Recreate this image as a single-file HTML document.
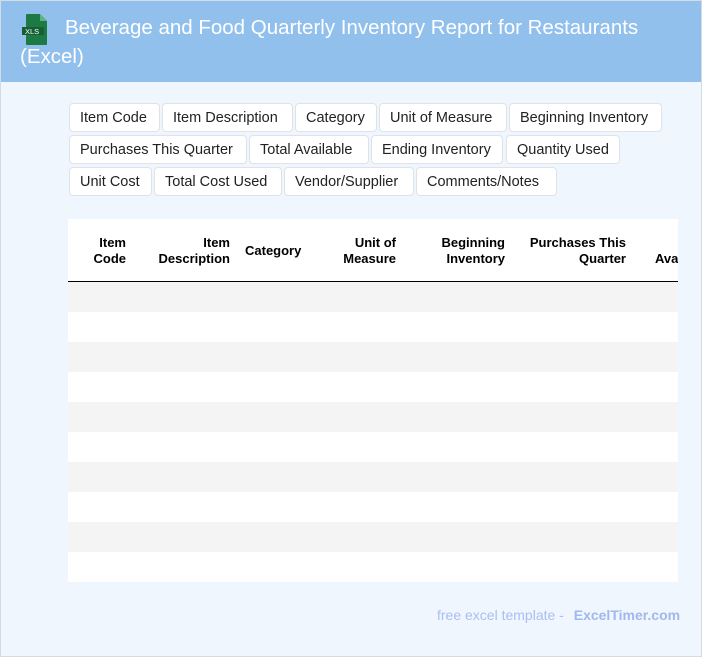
<!DOCTYPE html>
<html><head><meta charset="utf-8"><style>
*{box-sizing:border-box;margin:0;padding:0}
body{width:702px;height:657px;background:#eff6fe;font-family:"Liberation Sans",Roboto,sans-serif;overflow:hidden;position:relative}
.bd{position:absolute;left:0;top:0;width:702px;height:657px;border:1px solid #d3dbe3}
.hdr{position:absolute;left:1px;top:1px;width:700px;height:81px;background:#91c0ec}
.title{position:absolute;left:20px;top:13px;width:670px;color:#fff;font-size:20.5px;line-height:29px;text-indent:45px}
.tag{position:absolute;height:29px;border:1px solid #dfe3e8;border-radius:4px;background:#fff;font-size:14.5px;line-height:28px;padding:0 10px;color:#222;white-space:nowrap}
.tbl{position:absolute;left:68px;top:219px;width:610px;height:363px;background:#fff;overflow:hidden}
.th{position:absolute;font-weight:bold;font-size:13px;line-height:16px;color:#000;white-space:nowrap}
.r{text-align:right}
.line{position:absolute;left:0;top:62px;width:610px;height:1px;background:#000}
.row{position:absolute;left:0;width:610px;height:30px}
.g{background:#f4f4f4}
.foot{position:absolute;left:437px;top:607px;font-size:14px;color:#a9bff0}
.foot b{color:#a1b8ec;margin-left:6px}
</style></head><body>
<div class="hdr"></div>
<svg style="position:absolute;left:22px;top:14px" width="28" height="31" viewBox="0 0 28 31"><path d="M5 0h13l7 7v23a1 1 0 0 1-1 1H5a1 1 0 0 1-1-1V1a1 1 0 0 1 1-1z" fill="#1e7a45"/><path d="M18 0v7h7z" fill="#5fb27f"/><rect x="0" y="13" width="22" height="8" fill="#155f35"/><text x="3" y="20" font-family="Liberation Sans" font-size="7.5" fill="#fff">XLS</text></svg>
<div class="title">Beverage and Food Quarterly Inventory Report for Restaurants (Excel)</div>
<div class="tag" style="left:69px;top:103px;width:91px">Item Code</div>
<div class="tag" style="left:162px;top:103px;width:131px">Item Description</div>
<div class="tag" style="left:295px;top:103px;width:82px">Category</div>
<div class="tag" style="left:379px;top:103px;width:128px">Unit of Measure</div>
<div class="tag" style="left:509px;top:103px;width:153px">Beginning Inventory</div>
<div class="tag" style="left:69px;top:135px;width:178px">Purchases This Quarter</div>
<div class="tag" style="left:249px;top:135px;width:120px">Total Available</div>
<div class="tag" style="left:371px;top:135px;width:132px">Ending Inventory</div>
<div class="tag" style="left:506px;top:135px;width:114px">Quantity Used</div>
<div class="tag" style="left:69px;top:167px;width:83px">Unit Cost</div>
<div class="tag" style="left:154px;top:167px;width:128px">Total Cost Used</div>
<div class="tag" style="left:284px;top:167px;width:130px">Vendor/Supplier</div>
<div class="tag" style="left:416px;top:167px;width:141px">Comments/Notes</div>
<div class="tbl">
<div class="th r" style="right:552px;top:16px">Item<br>Code</div>
<div class="th r" style="right:448px;top:16px">Item<br>Description</div>
<div class="th" style="left:177px;top:24px">Category</div>
<div class="th r" style="right:282px;top:16px">Unit of<br>Measure</div>
<div class="th r" style="right:173px;top:16px">Beginning<br>Inventory</div>
<div class="th r" style="right:52px;top:16px">Purchases This<br>Quarter</div>
<div class="th" style="left:587px;top:32px">Available</div>
<div class="line"></div>
<div class="row g" style="top:63px"></div>
<div class="row g" style="top:123px"></div>
<div class="row g" style="top:183px"></div>
<div class="row g" style="top:243px"></div>
<div class="row g" style="top:303px"></div>
</div>
<div class="foot">free excel template - <b>ExcelTimer.com</b></div>
<div class="bd"></div>
</body></html>
